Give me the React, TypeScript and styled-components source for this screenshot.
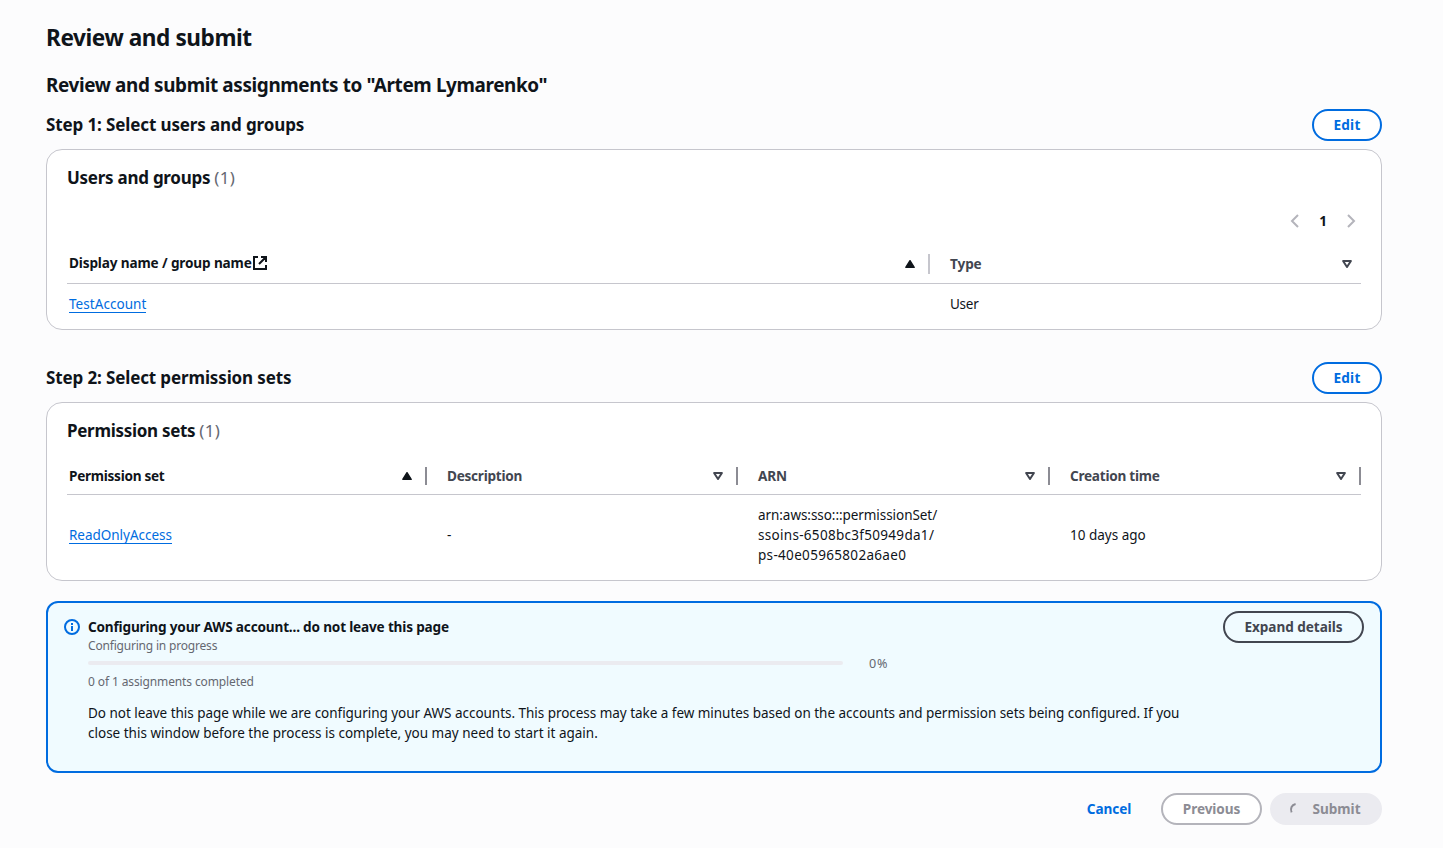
import React from "react";
import styled, { createGlobalStyle } from "styled-components";

const c = {
  text: "#0f141a",
  header: "#424650",
  muted: "#656871",
  link: "#006ce0",
  border: "#c6c6cd",
  divider: "#8c8c94",
  disabled: "#8c8c94",
  disabledBorder: "#b4b4bb",
  disabledBg: "#ebebf0",
};

const GlobalStyle = createGlobalStyle`
  *, *::before, *::after { box-sizing: border-box; }
  body {
    margin: 0;
    background: #fcfcfd;
    color: ${c.text};
    font: 400 13.5px/20px "Noto Sans", "Open Sans", sans-serif;
  }
  h1, h2, h3, p { margin: 0; }
`;

const Page = styled.main`
  min-height: 848px;
  padding: 20px 61px 0 46px;
`;

/* Text with its own tracking, in px */
const T = styled.span<{ $ls?: number }>`
  letter-spacing: ${(p) => p.$ls ?? 0}px;
  white-space: nowrap;
`;

const Title = styled.h1`
  font-size: 22.6px;
  line-height: 36px;
  font-weight: 700;
`;

const Subtitle = styled.h2`
  margin-top: 17px;
  font-size: 18.9px;
  line-height: 24px;
  font-weight: 700;
`;

const StepHeader = styled.div<{ $top: number }>`
  display: flex;
  align-items: center;
  justify-content: space-between;
  height: 32px;
  margin: ${(p) => p.$top}px 0 8px;
`;

const StepTitle = styled.h3`
  font-size: 17px;
  line-height: 22px;
  font-weight: 700;
`;

const Button = styled.button<{ $width: number; $kind?: "normal" | "neutral" | "disabled" | "loading" | "link" }>`
  display: flex;
  align-items: center;
  justify-content: center;
  flex: none;
  width: ${(p) => p.$width}px;
  height: 32px;
  padding: ${(p) => (p.$kind === "loading" ? "0 3px 0 0" : 0)};
  border: 2px solid
    ${({ $kind }) =>
      $kind === "neutral" ? c.header : $kind === "disabled" ? c.disabledBorder : $kind === "loading" ? c.disabledBg : $kind === "link" ? "transparent" : c.link};
  border-radius: 20px;
  background: ${({ $kind }) => ($kind === "neutral" || $kind === "link" ? "transparent" : $kind === "loading" ? c.disabledBg : "#fff")};
  color: ${({ $kind }) => ($kind === "neutral" ? c.header : $kind === "disabled" || $kind === "loading" ? c.disabled : c.link)};
  font: 700 13.6px/20px "Noto Sans", "Open Sans", sans-serif;
`;

const Card = styled.section<{ $height: number }>`
  height: ${(p) => p.$height}px;
  padding: 16px 20px 0;
  border: 1px solid ${c.border};
  border-radius: 16px;
  background: #fff;
`;

const CardTitle = styled.h2`
  display: flex;
  gap: 4px;
  font-size: 17px;
  line-height: 24px;
  font-weight: 700;
`;

const Count = styled.span`
  color: ${c.muted};
  font-weight: 400;
  letter-spacing: 0.3px;
`;

const Pagination = styled.div`
  display: flex;
  align-items: center;
  justify-content: flex-end;
  gap: 8px;
  height: 20px;
  margin-top: 21px;
  padding-right: 2px;
  font-weight: 700;
`;

const PageNumber = styled.span`
  width: 24px;
  text-align: center;
`;

const Row = styled.div<{ $cols: string; $height: number; $top?: number; $head?: boolean }>`
  display: grid;
  grid-template-columns: ${(p) => p.$cols};
  align-items: center;
  height: ${(p) => p.$height}px;
  margin-top: ${(p) => p.$top ?? 0}px;
  ${(p) => p.$head && `border-bottom: 1px solid ${c.border};`}
`;

const HeadCell = styled.div<{ $sorted?: boolean; $bar?: string; $barHeight?: number }>`
  display: flex;
  align-items: center;
  justify-content: space-between;
  padding: 0 0 0 20px;
  color: ${(p) => (p.$sorted ? c.text : c.header)};
  font-size: 13.6px;
  font-weight: 700;
  &:first-child { padding-left: 2px; }
  &::after {
    content: "";
    flex: none;
    width: ${(p) => (p.$bar ? 2 : 0)}px;
    height: ${(p) => p.$barHeight ?? 18}px;
    margin-left: ${(p) => (p.$bar ? 12 : 8)}px;
    background: ${(p) => p.$bar ?? "none"};
  }
`;

const HeadLabel = styled.span<{ $lift?: boolean }>`
  display: flex;
  align-items: center;
  flex: 1;
  ${(p) => p.$lift && "padding-bottom: 1px;"}
`;

const Cell = styled.div`
  padding-left: 20px;
  &:first-child { padding-left: 2px; }
`;

const Link = styled.a`
  display: block;
  width: fit-content;
  height: 18px;
  line-height: 18px;
  border-bottom: 1px solid ${c.link};
  color: ${c.link};
`;

const Alert = styled.section`
  display: flex;
  align-items: flex-start;
  height: 172px;
  margin-top: 20px;
  padding: 8px 16px 0;
  border: 2px solid ${c.link};
  border-radius: 12px;
  background: #f0fbff;
`;

const AlertIcon = styled.svg`
  flex: none;
  margin: 8px 8px 0 0;
`;

const AlertBody = styled.div`
  flex: 1;
  padding-top: 6px;
`;

const AlertTitle = styled.div`
  font-size: 13.6px;
  font-weight: 700;
  line-height: 20px;
`;

const Small = styled.div`
  color: ${c.muted};
  font-size: 12px;
  line-height: 16px;
`;

const Status = styled(Small)`
  padding-top: 1px;
`;

const Percent = styled(Small)`
  font-size: 12.6px;
`;

const Progress = styled.div`
  display: flex;
  align-items: center;
  gap: 26px;
  height: 16px;
  margin: 2px 0 1px;
`;

const Track = styled.div`
  width: 755px;
  height: 4px;
  margin-bottom: 2px;
  border-radius: 4px;
  background: ${c.disabledBg};
`;

const Message = styled.p`
  margin-top: 13px;
`;

const Footer = styled.footer`
  display: flex;
  justify-content: flex-end;
  gap: 8px;
  margin-top: 20px;
`;

const Spinner = styled.svg`
  margin-right: 8px;
`;

const SortUp = () => (
  <svg width="12" height="10" viewBox="0 0 12 10">
    <path d="M6 1.7 L10.2 8.3 H1.8 Z" fill={c.text} stroke={c.text} strokeWidth="1.4" strokeLinejoin="round" />
  </svg>
);

const SortDown = () => (
  <svg width="12" height="10" viewBox="0 0 12 10">
    <path d="M2.1 2 H9.9 L6 8 Z" fill="none" stroke={c.header} strokeWidth="2" strokeLinejoin="round" />
  </svg>
);

const Chevron = ({ right }: { right?: boolean }) => (
  <svg width="16" height="16" viewBox="0 0 16 16">
    <path d={right ? "M5 2l6 6-6 6" : "M11 2L5 8l6 6"} fill="none" stroke={c.disabledBorder} strokeWidth="2" />
  </svg>
);

const External = () => (
  <svg width="16" height="16" viewBox="0 0 16 16">
    <path d="M6 2H2v12h12v-4M9 2h5v5M14 2L7 9" fill="none" stroke={c.text} strokeWidth="2" />
  </svg>
);

type HeadProps = { label: string; ls?: number; sorted?: boolean; bar?: string; barHeight?: number; external?: boolean };

const Head = ({ label, ls, sorted, bar, barHeight, external }: HeadProps) => (
  <HeadCell $sorted={sorted} $bar={bar} $barHeight={barHeight}>
    <HeadLabel $lift={external}>
      <T $ls={ls}>{label}</T>
      {external && <External />}
    </HeadLabel>
    {sorted ? <SortUp /> : <SortDown />}
  </HeadCell>
);

const userCols = "863px 431px";
const permissionCols = "360px 311px 312px 311px";

export default function App() {
  return (
    <>
      <GlobalStyle />
      <Page>
        <Title><T $ls={-0.43}>Review and submit</T></Title>
        <Subtitle><T $ls={-0.37}>Review and submit assignments to "Artem Lymarenko"</T></Subtitle>

        <StepHeader $top={12}>
          <StepTitle><T $ls={-0.12}>Step 1: Select users and groups</T></StepTitle>
          <Button $width={70}><T $ls={0.2}>Edit</T></Button>
        </StepHeader>
        <Card $height={181}>
          <CardTitle>
            <T $ls={-0.26}>Users and groups</T>
            <Count>(1)</Count>
          </CardTitle>
          <Pagination>
            <Chevron />
            <PageNumber>1</PageNumber>
            <Chevron right />
          </Pagination>
          <Row $head $cols={userCols} $height={40} $top={13}>
            <Head label="Display name / group name" ls={-0.14} sorted external bar={c.border} barHeight={20} />
            <Head label="Type" ls={-0.1} />
          </Row>
          <Row $cols={userCols} $height={40}>
            <Cell><Link><T $ls={0.05}>TestAccount</T></Link></Cell>
            <Cell><T $ls={-0.25}>User</T></Cell>
          </Row>
        </Card>

        <StepHeader $top={32}>
          <StepTitle><T $ls={-0.13}>Step 2: Select permission sets</T></StepTitle>
          <Button $width={70}><T $ls={0.2}>Edit</T></Button>
        </StepHeader>
        <Card $height={179}>
          <CardTitle>
            <T $ls={-0.3}>Permission sets</T>
            <Count>(1)</Count>
          </CardTitle>
          <Row $head $cols={permissionCols} $height={38} $top={14}>
            <Head label="Permission set" ls={-0.28} sorted bar={c.divider} />
            <Head label="Description" ls={-0.26} bar={c.divider} />
            <Head label="ARN" ls={-0.1} bar={c.divider} />
            <Head label="Creation time" ls={-0.26} bar={c.divider} />
          </Row>
          <Row $cols={permissionCols} $height={80}>
            <Cell><Link><T $ls={-0.03}>ReadOnlyAccess</T></Link></Cell>
            <Cell>-</Cell>
            <Cell>
              <T $ls={-0.06}>arn:aws:sso:::permissionSet/</T><br />
              <T $ls={0.3}>ssoins-6508bc3f50949da1/</T><br />
              <T $ls={0.32}>ps-40e05965802a6ae0</T>
            </Cell>
            <Cell><T>10 days ago</T></Cell>
          </Row>
        </Card>

        <Alert>
          <AlertIcon width="16" height="16" viewBox="0 0 16 16">
            <circle cx="8" cy="8" r="7" fill="none" stroke={c.link} strokeWidth="2" />
            <path d="M8 12V7M8 6V4" stroke={c.link} strokeWidth="2" />
          </AlertIcon>
          <AlertBody>
            <AlertTitle><T $ls={-0.18}>Configuring your AWS account... do not leave this page</T></AlertTitle>
            <Status><T $ls={-0.19}>Configuring in progress</T></Status>
            <Progress>
              <Track />
              <Percent><T $ls={0.9}>0%</T></Percent>
            </Progress>
            <Status><T $ls={-0.12}>0 of 1 assignments completed</T></Status>
            <Message>
              <T $ls={-0.033}>Do not leave this page while we are configuring your AWS accounts. This process may take a few minutes based on the accounts and permission sets being configured. If you</T><br />
              <T>close this window before the process is complete, you may need to start it again.</T>
            </Message>
          </AlertBody>
          <Button $width={141} $kind="neutral"><T $ls={-0.05}>Expand details</T></Button>
        </Alert>

        <Footer>
          <Button $width={88} $kind="link"><T $ls={-0.1}>Cancel</T></Button>
          <Button $width={101} $kind="disabled"><T $ls={-0.1}>Previous</T></Button>
          <Button $width={112} $kind="loading">
            <Spinner width="16" height="16" viewBox="0 0 16 16">
              <path d="M7.6 3C3.8 3.9 1.9 7.2 3.6 11.4" fill="none" stroke={c.disabled} strokeWidth="2" />
            </Spinner>
            <T>Submit</T>
          </Button>
        </Footer>
      </Page>
    </>
  );
}
